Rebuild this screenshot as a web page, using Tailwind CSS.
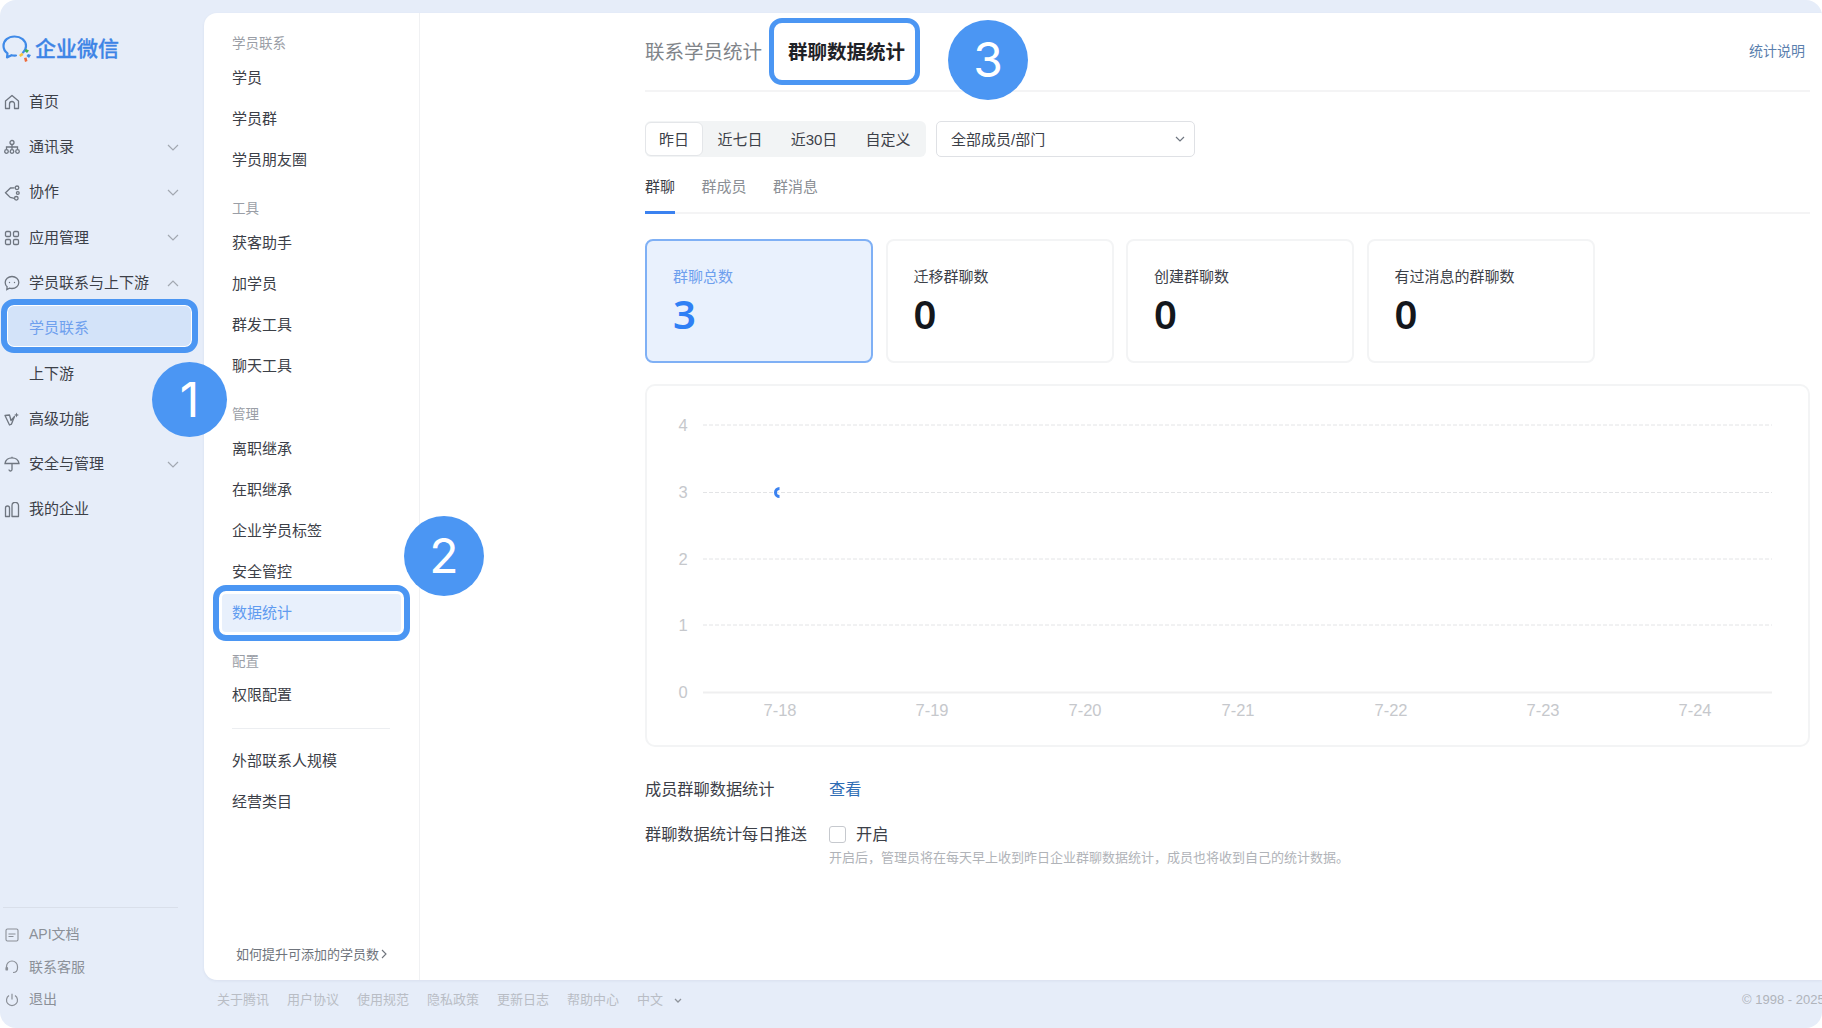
<!DOCTYPE html>
<html lang="zh-CN">
<head>
    <meta charset="UTF-8" />
    <meta name="viewport" content="width=device-width, initial-scale=1.0" />
    <title>企业微信 - 群聊数据统计</title>
    <script src="https://cdn.jsdelivr.net/npm/@tailwindcss/browser@4"></script>
</head>
<body class="bg-white overflow-hidden font-['Liberation_Sans','Noto_Sans_CJK_SC',sans-serif]">

<div class="relative flex h-[1028px] w-[1822px] overflow-hidden rounded-[16px] bg-[#e6edf9]">

    <!-- left nav -->
    <aside class="flex w-[204px] shrink-0 flex-col text-[15px] text-[#3c4048]">
        <div class="flex h-[79.400px] items-start pt-[35px] pl-[2px]">
            <svg class="h-[28px] w-[30px]" viewBox="0 0 30 28" fill="none">
                <path d="M21 17.500c2-1.800 3-4 3-6.500C24 5.500 18.800 1.500 12.500 1.500S1.500 5.500 1.500 11c0 3 1.500 5.500 4 7.300L5 22.500l4.500-2.300c1.500.4 3 .5 4.500.3" stroke="#3f8ae8" stroke-width="2.200" stroke-linecap="round" stroke-linejoin="round"/>
                <path d="M24 14l3 1.500-2 2.500-2.500-2z" fill="#45b34a"/>
                <path d="M26 19l3 1-2 3-2.500-2z" fill="#3f8ae8"/>
                <path d="M17 20l3-2.500 1.500 2.500-3 2z" fill="#f5c542"/>
                <path d="M22 23l2.500-.5 1 3.500-2.500 1z" fill="#ee6b3b"/>
            </svg>
            <span class="ml-[3px] text-[21px] leading-[28px] font-medium text-[#3d84e6] [-webkit-text-stroke:0.3px_#3d84e6]">企业微信</span>
        </div>

        <nav class="flex flex-col">
            <div class="flex h-[45.300px] items-center pl-[4px]">
                <svg class="mr-[9px] h-[16px] w-[16px]" viewBox="0 0 16 16" fill="none" stroke="#6f7680" stroke-width="1.300"><path d="M1.500 7 8 1.500 14.500 7v7.500h-4V10a2.500 2.500 0 0 0-5 0v4.500h-4z" stroke-linejoin="round"/></svg>
                <span>首页</span>
            </div>
            <div class="flex h-[45.300px] items-center pl-[4px]">
                <svg class="mr-[9px] h-[16px] w-[16px]" viewBox="0 0 16 16" fill="none" stroke="#6f7680" stroke-width="1.300"><circle cx="8" cy="3.500" r="2"/><circle cx="2.500" cy="12.500" r="1.800"/><circle cx="8" cy="12.500" r="1.800"/><circle cx="13.500" cy="12.500" r="1.800"/><path d="M2.500 10V8h11v2M8 5.500V10"/></svg>
                <span>通讯录</span>
                <svg class="ml-auto mr-[25px] h-[7px] w-[12px]" viewBox="0 0 12 7" fill="none" stroke="#a2a8b1" stroke-width="1.200"><path d="m1 1 5 5 5-5"/></svg>
            </div>
            <div class="flex h-[45.300px] items-center pl-[4px]">
                <svg class="mr-[9px] h-[16px] w-[16px]" viewBox="0 0 16 16" fill="none" stroke="#6f7680" stroke-width="1.300"><path d="M10.500 2.800 6.500 3 1.500 7.800l4.800 4.700 4 .8"/><circle cx="13" cy="2.800" r="1.800"/><circle cx="13.800" cy="8" r="1.400"/><circle cx="12.300" cy="13.300" r="1.800"/></svg>
                <span>协作</span>
                <svg class="ml-auto mr-[25px] h-[7px] w-[12px]" viewBox="0 0 12 7" fill="none" stroke="#a2a8b1" stroke-width="1.200"><path d="m1 1 5 5 5-5"/></svg>
            </div>
            <div class="flex h-[45.300px] items-center pl-[4px]">
                <svg class="mr-[9px] h-[16px] w-[16px]" viewBox="0 0 16 16" fill="none" stroke="#6f7680" stroke-width="1.300"><rect x="1.500" y="1.500" width="5" height="5" rx="1.200"/><rect x="9.500" y="1.500" width="5" height="5" rx="1.200"/><rect x="1.500" y="9.500" width="5" height="5" rx="1.200"/><rect x="9.500" y="9.500" width="5" height="5" rx="1.200"/></svg>
                <span>应用管理</span>
                <svg class="ml-auto mr-[25px] h-[7px] w-[12px]" viewBox="0 0 12 7" fill="none" stroke="#a2a8b1" stroke-width="1.200"><path d="m1 1 5 5 5-5"/></svg>
            </div>
            <div class="flex h-[45.300px] items-center pl-[4px]">
                <svg class="mr-[9px] h-[16px] w-[16px]" viewBox="0 0 16 16" fill="none" stroke="#6f7680" stroke-width="1.300"><path d="M8 1.500c3.800 0 6.800 2.700 6.800 6s-3 6-6.800 6c-.9 0-1.700-.1-2.500-.4L2.800 14.500l.3-2.700a5.700 5.700 0 0 1-1.900-4.300c0-3.300 3-6 6.800-6z"/><circle cx="5.500" cy="7.500" r=".7" fill="#6f7680" stroke="none"/><circle cx="10.500" cy="7.500" r=".7" fill="#6f7680" stroke="none"/></svg>
                <span>学员联系与上下游</span>
                <svg class="ml-auto mr-[25px] h-[7px] w-[12px]" viewBox="0 0 12 7" fill="none" stroke="#a2a8b1" stroke-width="1.200"><path d="m1 6 5-5 5 5"/></svg>
            </div>
            <div class="relative flex h-[45.300px] items-center pl-[29px] text-[#6ea0ee]">
                <div class="absolute top-[-7px] left-[1px] h-[54px] w-[197px] rounded-[13px] border-[6px] border-[#4b96f3] bg-[#d3e3f9] shadow-[inset_0_0_0_1px_white]"></div>
                <span class="relative">学员联系</span>
            </div>
            <div class="flex h-[45.300px] items-center pl-[29px]">上下游</div>
            <div class="flex h-[45.300px] items-center pl-[4px]">
                <svg class="mr-[9px] h-[16px] w-[16px]" viewBox="0 0 16 16" fill="none" stroke="#6f7680" stroke-width="1.300"><path d="M1 4.500 5.500 14l2-.9 3-7.600-3.500 4L5.500 4z" stroke-linejoin="round"/><path d="M12.500 1.500l.7 1.800 1.800.7-1.800.7-.7 1.800-.7-1.800-1.800-.7 1.800-.7z" fill="#6f7680" stroke="none"/></svg>
                <span>高级功能</span>
            </div>
            <div class="flex h-[45.300px] items-center pl-[4px]">
                <svg class="mr-[9px] h-[16px] w-[16px]" viewBox="0 0 16 16" fill="none" stroke="#6f7680" stroke-width="1.300"><path d="M1 7.500C1.500 4 4.500 1.800 8 1.800s6.500 2.200 7 5.700zM8 .8v1M8 7.500v6a1.500 1.500 0 0 1-3 0"/></svg>
                <span>安全与管理</span>
                <svg class="ml-auto mr-[25px] h-[7px] w-[12px]" viewBox="0 0 12 7" fill="none" stroke="#a2a8b1" stroke-width="1.200"><path d="m1 1 5 5 5-5"/></svg>
            </div>
            <div class="flex h-[45.300px] items-center pl-[4px]">
                <svg class="mr-[9px] h-[16px] w-[16px]" viewBox="0 0 16 16" fill="none" stroke="#6f7680" stroke-width="1.300"><path d="M1.500 14.500V6a2 2 0 0 1 4 0v8.500zM8 14.500V3.500a3 3 0 0 1 6.500 0v11z" stroke-linejoin="round"/></svg>
                <span>我的企业</span>
            </div>
        </nav>

        <div class="mt-auto flex flex-col pb-[12px] text-[14px] text-[#8b9098]">
            <div class="mb-[11px] ml-[3px] h-px w-[175px] bg-[#d9dfea]"></div>
            <div class="flex h-[32.500px] items-center pl-[5px]">
                <svg class="mr-[10px] h-[14px] w-[14px]" viewBox="0 0 14 14" fill="none" stroke="#8b9098" stroke-width="1.100"><rect x="1" y="1" width="12" height="12" rx="1.500"/><path d="M3.500 6h7M3.500 8.500h5" stroke-width="1"/></svg>
                <span>API文档</span>
            </div>
            <div class="flex h-[32.500px] items-center pl-[5px]">
                <svg class="mr-[10px] h-[14px] w-[14px]" viewBox="0 0 14 14" fill="none" stroke="#8b9098" stroke-width="1.200"><path d="M1.500 8V6.500a5.500 5.500 0 0 1 11 0V8M12.500 8c0 3-2 4.500-4.500 4.500"/><rect x="1" y="7.500" width="1.500" height="2.500" rx=".6" fill="#8b9098"/></svg>
                <span>联系客服</span>
            </div>
            <div class="flex h-[32.500px] items-center pl-[5px]">
                <svg class="mr-[10px] h-[14px] w-[14px]" viewBox="0 0 14 14" fill="none" stroke="#8b9098" stroke-width="1.200"><path d="M4 2.500a5.500 5.500 0 1 0 6 0M7 .8V6.500"/></svg>
                <span>退出</span>
            </div>
        </div>
    </aside>

    <div class="flex min-w-0 flex-1 flex-col pt-[13px]">
        <!-- white panel -->
        <div class="flex h-[967px] rounded-l-[13px] bg-white shadow-[0_1px_3px_rgba(60,80,120,0.08)]">

            <!-- sub menu -->
            <div class="flex w-[216px] shrink-0 flex-col border-r border-[#f0f1f3] pt-[18px] pl-[28px] text-[15px] text-[#3c4048]">
                <div class="flex h-[27px] items-center text-[13.500px] text-[#9a9ea6]">学员联系</div>
                <div class="flex h-[41px] items-center">学员</div>
                <div class="flex h-[41px] items-center">学员群</div>
                <div class="flex h-[41px] items-center">学员朋友圈</div>
                <div class="mt-[15px] flex h-[27px] items-center text-[13.500px] text-[#9a9ea6]">工具</div>
                <div class="flex h-[41px] items-center">获客助手</div>
                <div class="flex h-[41px] items-center">加学员</div>
                <div class="flex h-[41px] items-center">群发工具</div>
                <div class="flex h-[41px] items-center">聊天工具</div>
                <div class="mt-[15px] flex h-[27px] items-center text-[13.500px] text-[#9a9ea6]">管理</div>
                <div class="flex h-[41px] items-center">离职继承</div>
                <div class="flex h-[41px] items-center">在职继承</div>
                <div class="flex h-[41px] items-center">企业学员标签</div>
                <div class="flex h-[41px] items-center">安全管控</div>
                <div class="relative flex h-[41px] items-center text-[#5f9bf0]">
                    <div class="absolute top-[-8px] left-[-19px] h-[56px] w-[197px] rounded-[13px] border-[6px] border-[#4b96f3] bg-[#e8f0fc] shadow-[inset_0_0_0_3px_white]"></div>
                    <span class="relative">数据统计</span>
                </div>
                <div class="mt-[15px] flex h-[26px] items-center text-[13.500px] text-[#9a9ea6]">配置</div>
                <div class="flex h-[41px] items-center">权限配置</div>
                <div class="mt-[11.500px] mb-[12px] h-px w-[158px] bg-[#eceef1]"></div>
                <div class="flex h-[41px] items-center">外部联系人规模</div>
                <div class="flex h-[41px] items-center">经营类目</div>
                <div class="mt-auto mb-[16px] flex items-center pl-[4px] text-[13px] text-[#6f747c]">
                    <span>如何提升可添加的学员数</span>
                    <svg class="ml-[2px] h-[10px] w-[6px]" viewBox="0 0 6 10" fill="none" stroke="#6f747c" stroke-width="1.100"><path d="m1 1 4 4-4 4"/></svg>
                </div>
            </div>

            <!-- main -->
            <div class="min-w-0 flex-1 pr-[12px] pl-[225px]">
                <div class="flex h-[79px] items-center border-b-2 border-[#f4f4f5] pt-[2px] text-[19.500px]">
                    <span class="text-[#808489]">联系学员统计</span>
                    <span class="relative ml-[26px] font-bold text-[#1f2227]">
                        <span class="absolute top-[-20px] left-[-19px] h-[67px] w-[151px] rounded-[13px] border-[5px] border-[#4b96f3]"></span>
                        群聊数据统计
                    </span>
                    <span class="mr-[5px] mb-[2px] ml-auto text-[14px] text-[#5b7fae]">统计说明</span>
                </div>

                <div class="mt-[29px] flex gap-[10px] text-[15px] text-[#3c4048]">
                    <div class="flex h-[36px] w-[281px] items-center rounded-[6px] bg-[#f2f4f5]">
                        <div class="flex h-[34px] w-[58px] items-center justify-center rounded-[6px] border border-[#e4e6e9] bg-white pt-[2px]">昨日</div>
                        <div class="mt-[2px] ml-[14px] w-[46px] text-center whitespace-nowrap">近七日</div>
                        <div class="mt-[2px] ml-[28px] flex w-[46px] justify-center whitespace-nowrap">近30日</div>
                        <div class="mt-[2px] ml-[28px] w-[46px] text-center whitespace-nowrap">自定义</div>
                    </div>
                    <div class="flex h-[36px] w-[259px] items-center justify-between rounded-[5px] border border-[#dfe1e5] pr-[9px] pl-[14px]">
                        <span class="pt-[2px]">全部成员/部门</span>
                        <svg class="h-[6px] w-[10px]" viewBox="0 0 10 6" fill="none" stroke="#6f7680" stroke-width="1.200"><path d="m1 1 4 4 4-4"/></svg>
                    </div>
                </div>

                <div class="mt-[14px] flex h-[43px] gap-[26.500px] border-b-2 border-[#f4f4f5] text-[15px] text-[#8b8f95]">
                    <div class="relative pt-[5px] text-[#3c4048]">群聊<span class="absolute right-0 bottom-[-2px] left-0 h-[3px] bg-[#3b82f0]"></span></div>
                    <div class="pt-[5px]">群成员</div>
                    <div class="pt-[5px]">群消息</div>
                </div>

                <div class="mt-[25px] flex gap-[12.500px]">
                    <div class="h-[124px] w-[228px] rounded-[8px] border-2 border-[#7fb0f5] bg-[#e9f1fd] pt-[26px] pl-[26px]">
                        <div class="text-[15px] leading-[20px] text-[#6ea0ee]">群聊总数</div>
                        <div class="font-['Noto_Sans'] text-[40px] leading-[54px] font-semibold text-[#2f80f5]">3</div>
                    </div>
                    <div class="h-[124px] w-[228px] rounded-[8px] border-2 border-[#f3f4f5] pt-[26px] pl-[26px]">
                        <div class="text-[15px] leading-[20px] text-[#3c4048]">迁移群聊数</div>
                        <div class="font-['Noto_Sans'] text-[40px] leading-[54px] font-semibold text-[#14171c]">0</div>
                    </div>
                    <div class="h-[124px] w-[228px] rounded-[8px] border-2 border-[#f3f4f5] pt-[26px] pl-[26px]">
                        <div class="text-[15px] leading-[20px] text-[#3c4048]">创建群聊数</div>
                        <div class="font-['Noto_Sans'] text-[40px] leading-[54px] font-semibold text-[#14171c]">0</div>
                    </div>
                    <div class="h-[124px] w-[228px] rounded-[8px] border-2 border-[#f3f4f5] pt-[26px] pl-[26px]">
                        <div class="text-[15px] leading-[20px] text-[#3c4048]">有过消息的群聊数</div>
                        <div class="font-['Noto_Sans'] text-[40px] leading-[54px] font-semibold text-[#14171c]">0</div>
                    </div>
                </div>

                <!-- chart -->
                <div class="mt-[21px] h-[363px] rounded-[10px] border-2 border-[#f3f4f5]">
                    <svg class="block h-full w-full" viewBox="0 -1 1161 359" fill="#c6c8cc" font-size="16.500">
                        <g stroke="#e3e4e6" stroke-dasharray="4 2">
                            <path d="M56 38H1125M56 105.500H1125M56 172H1125M56 238H1125"/>
                        </g>
                        <path d="M56 305.500H1125" stroke="#efeff0" stroke-width="2"/>
                        <g text-anchor="middle">
                            <text x="36" y="44">4</text>
                            <text x="36" y="111">3</text>
                            <text x="36" y="178">2</text>
                            <text x="36" y="244">1</text>
                            <text x="36" y="311">0</text>
                            <text x="133" y="329">7-18</text>
                            <text x="285" y="329">7-19</text>
                            <text x="438" y="329">7-20</text>
                            <text x="591" y="329">7-21</text>
                            <text x="744" y="329">7-22</text>
                            <text x="896" y="329">7-23</text>
                            <text x="1048" y="329">7-24</text>
                        </g>
                        <path d="M132.500 101.500a4 4 0 0 0 0 8" fill="none" stroke="#3b82f0" stroke-width="3"/>
                    </svg>
                </div>

                <div class="mt-[30px] flex items-center text-[16.200px] leading-[24px] text-[#3c4048]">
                    <span class="w-[184px]">成员群聊数据统计</span>
                    <span class="text-[#2f6db5]">查看</span>
                </div>
                <div class="mt-[21px] flex items-center text-[16.200px] leading-[24px] text-[#3c4048]">
                    <span class="w-[184px]">群聊数据统计每日推送</span>
                    <span class="h-[17px] w-[17px] rounded-[3px] border border-[#c6c9ce]"></span>
                    <span class="ml-[10px]">开启</span>
                </div>
                <div class="mt-[2px] pl-[184px] text-[13px] leading-[20px] text-[#b0b3b8]">开启后，管理员将在每天早上收到昨日企业群聊数据统计，成员也将收到自己的统计数据。</div>
            </div>
        </div>

        <!-- footer -->
        <div class="mt-[11px] flex items-center whitespace-nowrap pl-[13px] text-[13px] leading-[18px] text-[#b9bdc5]">
            <span>关于腾讯</span><span class="mx-[9px] h-[12px] w-px bg-[#cfd5e0]"></span>
            <span>用户协议</span><span class="mx-[9px] h-[12px] w-px bg-[#cfd5e0]"></span>
            <span>使用规范</span><span class="mx-[9px] h-[12px] w-px bg-[#cfd5e0]"></span>
            <span>隐私政策</span><span class="mx-[9px] h-[12px] w-px bg-[#cfd5e0]"></span>
            <span>更新日志</span><span class="mx-[9px] h-[12px] w-px bg-[#cfd5e0]"></span>
            <span>帮助中心</span><span class="mx-[9px] h-[12px] w-px bg-[#cfd5e0]"></span>
            <span>中文</span>
            <svg class="ml-[11px] h-[5px] w-[8px] shrink-0" viewBox="0 0 8 5" fill="none" stroke="#8f949c" stroke-width="1.300"><path d="m1 1 3 3 3-3"/></svg>
            <span class="ml-[1060px] shrink-0 text-[#b0b4bb]">© 1998 - 2025</span>
        </div>
    </div>

    <!-- numbered callouts -->
    <div class="absolute top-[362px] left-[152px] flex h-[75px] w-[75px] items-center justify-center rounded-full bg-[#4b96f3] font-['Inter'] text-[48px] text-white">1</div>
    <div class="absolute top-[516px] left-[404px] flex h-[80px] w-[80px] items-center justify-center rounded-full bg-[#4b96f3] font-['Inter'] text-[48px] text-white">2</div>
    <div class="absolute top-[20px] left-[948px] flex h-[80px] w-[80px] items-center justify-center rounded-full bg-[#4b96f3] font-['Inter'] text-[48px] text-white">3</div>
</div>

</body>
</html>
